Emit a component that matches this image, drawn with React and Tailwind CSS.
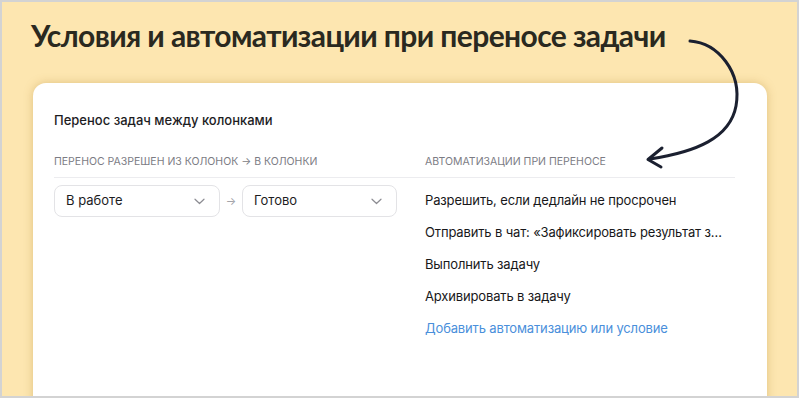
import React from "react";

function Chevron() {
  return (
    <svg width="11" height="7" viewBox="0 0 11 7" fill="none">
      <path d="M1 1.2 L5.5 5.5 L10 1.2" stroke="#8c8c92" strokeWidth="1.2" strokeLinecap="round" strokeLinejoin="round" />
    </svg>
  );
}

function Select({ label, width }) {
  return (
    <div className={`${width} h-[32px] rounded-[8px] border border-[#e3e3e6] flex items-center justify-between pl-[11px] pr-[14px] text-[13px] text-[#1d1d1f]`}>
      <span>{label}</span>
      <Chevron />
    </div>
  );
}

export default function App() {
  const items = [
    "Разрешить, если дедлайн не просрочен",
    "Отправить в чат: «Зафиксировать результат задачи в отчёте»",
    "Выполнить задачу",
    "Архивировать в задачу",
  ];
  return (
    <div className="relative w-[799px] h-[398px] overflow-hidden border-2 border-[#d3d3d3] bg-[#fde6b0] box-border">
      <h1
        className="pl-[29px] pt-[15px] text-[30px] leading-[36px] font-bold text-[#2a2920] tracking-[-0.6px]"
        style={{ fontFamily: "Lato, 'Open Sans', sans-serif" }}
      >
        Условия и автоматизации при переносе задачи
      </h1>

      <div
        className="ml-[31px] mr-[30px] mt-[30px] h-[360px] rounded-t-[13px] bg-white shadow-[0_0_10px_rgba(170,125,40,0.35)] pl-[21px] pr-[32px] pt-[29px]"
        style={{ fontFamily: "Inter, 'Noto Sans', sans-serif" }}
      >
        <div className="text-[13px] leading-[16px] font-medium text-[#1d1d1f]">
          Перенос задач между колонками
        </div>

        <div className="mt-[27px] flex border-b border-[#ececef] pb-[8px] text-[10.5px] leading-[14px] text-[#7c7c84] uppercase">
          <div className="w-[371px]">Перенос разрешен из колонок → в колонки</div>
          <div>Автоматизации при переносе</div>
        </div>

        <div className="flex items-start">
          <div className="w-[371px] pt-[7px] flex items-center">
            <Select label="В работе" width="w-[166px]" />
            <span className="w-[22px] text-center text-[11px] text-[#a4a4aa]">→</span>
            <Select label="Готово" width="w-[155px]" />
          </div>
          <div className="flex-1 min-w-0 pt-[7px] flex flex-col">
            {items.map((t) => (
              <div key={t} className="h-[32px] flex items-center text-[13px] tracking-[-0.15px] text-[#18181a]">
                <span className="block truncate max-w-[303px]">{t}</span>
              </div>
            ))}
            <div className="h-[32px] flex items-center text-[13px] tracking-[-0.15px] text-[#4a8fdb]">
              Добавить автоматизацию или условие
            </div>
          </div>
        </div>
      </div>

      <svg
        className="absolute left-0 top-0 w-[795px] h-[394px] pointer-events-none"
        viewBox="2 2 795 394"
        fill="none"
      >
        <path
          d="M690 41 C 718 43, 742 72, 736 106 C 730 138, 696 152, 650 159"
          stroke="#1b2030"
          strokeWidth="3"
          strokeLinecap="round"
        />
        <path
          d="M662 148 L 648 159.5 L 661 167"
          stroke="#1b2030"
          strokeWidth="3"
          strokeLinecap="round"
          strokeLinejoin="round"
        />
      </svg>
    </div>
  );
}
